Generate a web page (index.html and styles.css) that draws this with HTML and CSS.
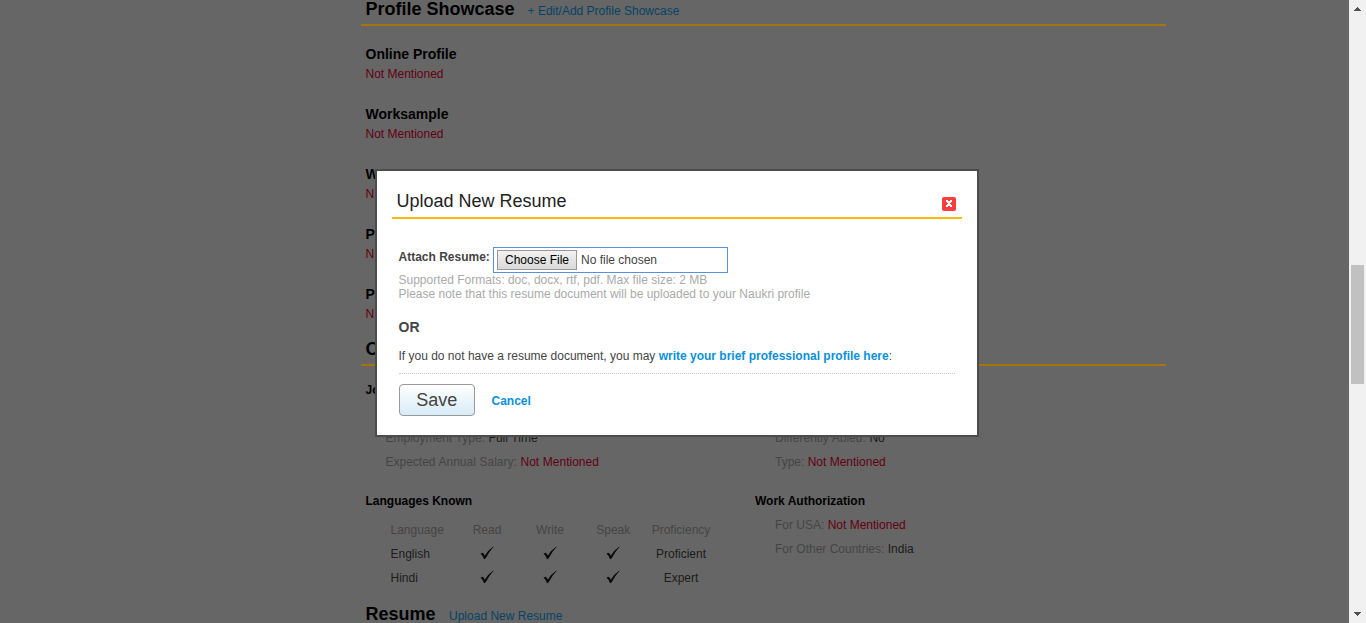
FILE: index.html
```
<!DOCTYPE html>
<html lang="en">
<head>
<meta charset="utf-8">
<title>Upload New Resume</title>
<link rel="stylesheet" href="styles.css">
</head>
<body>
<svg class="defs" width="0" height="0"><symbol id="tick" viewBox="0 0 14 14"><path d="M.5 7.6 2.8 6.8Q4 7.8 4.8 9.7 8 4 13.4.4L13.7.8Q8.8 6 5.7 12.2L4 13.2Q2.8 9.6.5 7.6Z" fill="#080808"/></symbol></svg>
<div class="page">
  <main class="content">
    <header class="section-head first"><h2>Profile Showcase</h2><a class="showcase-link">+ Edit/Add Profile Showcase</a></header>
    <div class="showcase">
      <section class="item"><h3>Online Profile</h3><p class="missing">Not Mentioned</p></section>
      <section class="item"><h3>Worksample</h3><p class="missing">Not Mentioned</p></section>
      <section class="item"><h3>W</h3><p class="missing">N</p></section>
      <section class="item"><h3>P</h3><p class="missing">N</p></section>
      <section class="item"><h3>P</h3><p class="missing">N</p></section>
    </div>
    <header class="section-head second"><h2>O</h2></header>
    <div class="columns">
      <section>
        <h4>Jo</h4>
        <p class="row"></p>
        <p class="row wide">Employment Type: <b>Full Time</b></p>
        <p class="row wide">Expected Annual Salary: <span class="missing">Not Mentioned</span></p>
        <h4 class="sub">Languages Known</h4>
        <div class="langs">
          <span class="name">Language</span><span>Read</span><span>Write</span><span>Speak</span><span>Proficiency</span>
          <b class="name">English</b><svg><use href="#tick"/></svg><svg><use href="#tick"/></svg><svg><use href="#tick"/></svg><b>Proficient</b>
          <b class="name">Hindi</b><svg><use href="#tick"/></svg><svg><use href="#tick"/></svg><svg><use href="#tick"/></svg><b>Expert</b>
        </div>
      </section>
      <section>
        <h4></h4>
        <p class="row"></p>
        <p class="row wide">Differently Abled: <b>No</b></p>
        <p class="row">Type: <span class="missing">Not Mentioned</span></p>
        <h4 class="sub">Work Authorization</h4>
        <p class="row">For USA: <span class="missing">Not Mentioned</span></p>
        <p class="row">For Other Countries: <b>India</b></p>
      </section>
    </div>
    <header class="resume-head"><h2>Resume</h2><a>Upload New Resume</a></header>
  </main>
  <div class="scrollbar">
    <svg width="17" height="17"><path d="M8 7h1v1h1v1h1v1h1v1H5v-1h1V9h1V8h1z" fill="#505050"/></svg>
    <div class="thumb"></div>
    <svg class="down" width="17" height="17"><path d="M5 6h7v1h-1v1h-1v1H9v1H8V9H7V8H6V7H5z" fill="#505050"/></svg>
  </div>
</div>
<div class="modal">
  <div class="modal-head"><h1>Upload New Resume</h1>
    <svg class="close" width="14" height="14"><rect width="14" height="14" rx="2" fill="#fa3c3c"/><path d="M4 3h2v1h2V3h2v2H9v1H8v1h1v1h1v2H8V9H6v1H4V8h1V7h1V6H5V5H4z" fill="#fff"/></svg>
  </div>
  <div class="modal-body">
    <div class="attach"><strong>Attach Resume:</strong><div class="file"><button>Choose File</button><span>No file chosen</span></div></div>
    <p class="hint">Supported Formats: doc, docx, rtf, pdf. Max file size: 2 MB<br>Please note that this resume document will be uploaded to your Naukri profile</p>
    <p class="or">OR</p>
    <p class="write"><span>If you do not have a resume document, you may </span><a>write your brief professional profile here</a>:</p>
    <div class="actions"><button class="save">Save</button><a>Cancel</a></div>
  </div>
</div>
</body>
</html>
```
FILE: styles.css
```
* { box-sizing: border-box; }
body { margin: 0; background: #666; font: 12px "Liberation Sans", Arial, sans-serif; overflow: hidden; }
h1, h2, h3, h4, p { margin: 0; }
.defs { position: absolute; }
.page { display: flex; justify-content: space-between; height: 623px; overflow: hidden; }
.content { width: 805px; margin-left: 361px; color: #454545; }
.content a { color: #064365; }
.content b { color: #1c1c1c; font-weight: normal; }
.content .missing { color: #640014; }
.section-head { display: flex; padding-left: 4.5px; border-bottom: 2px solid #a5730f; }
.first { height: 26px; }
.second { height: 22px; }
h2 { font-size: 18px; line-height: 20px; color: #000; }
.first h2 { margin-top: -1px; }
.second h2 { margin-top: -5px; }
.section-head a { margin-left: 13px; line-height: 22px; }
.showcase { padding: 18px 0 0 4.5px; }
.item { height: 60px; }
.item h3 { font-size: 14px; line-height: 20px; color: #000; }
.item .missing { line-height: 20px; }
.columns { display: grid; grid-template-columns: 389.5px 1fr; padding: 12px 0 0 4.5px; height: 236px; }
h4 { height: 24px; font-size: 12px; line-height: 24px; color: #000; }
h4.sub { margin: 15px 0 0; }
.row { height: 24px; line-height: 24px; padding-left: 20px; white-space: nowrap; }
.wide { word-spacing: .3px; }
.langs { display: grid; grid-template-columns: 65px 63px 63px 63.5px 72px; grid-auto-rows: 24px; padding: 5px 0 0 25px; line-height: 24px; text-align: center; }
.langs .name { text-align: left; }
.langs svg { width: 14px; height: 14px; justify-self: center; align-self: center; margin-top: -2px; }
.resume-head { display: flex; padding: 2px 0 0 4.5px; }
.resume-head a { margin-left: 13.5px; line-height: 24px; }
.scrollbar { width: 17px; height: 623px; background: #f1f1f1; display: flex; flex-direction: column; }
.thumb { width: 13px; height: 119px; background: #c1c1c1; margin: 248px 2px 0; }
.down { margin-top: auto; }
.modal { position: absolute; left: 375px; top: 169px; width: 604px; height: 268px; padding: 0 15px; border: 2px solid #4c4c4c; background: #fff; color: #444; }
.modal-head { display: flex; justify-content: space-between; height: 48px; padding: 18px 6px 0 4.5px; border-bottom: 2px solid #ffb80f; }
h1 { font-size: 18px; font-weight: normal; line-height: 24px; color: #222; }
.close { margin-top: 8px; }
.modal a { color: #0a91da; font-weight: bold; }
.modal-body { padding: 28px 7px 0 6.5px; }
.attach { display: flex; }
.attach strong { width: 94px; line-height: 20px; }
.file { display: flex; align-items: center; width: 235px; height: 26px; padding-left: 3.5px; border: 1px solid #5b8fdc; }
.file button { width: 80px; height: 20px; padding: 0; border: 1px solid #999; background: linear-gradient(#f2f2f2, #d9d9d9); font: 12px "Liberation Sans", Arial, sans-serif; color: #000; }
.file span { margin-left: 4px; }
.hint { color: #aaa; line-height: 14px; }
.or { margin-top: 17px; font-size: 14px; line-height: 18px; font-weight: bold; }
.write { height: 37px; margin-top: 1px; padding-top: 9px; line-height: 20px; border-bottom: 1px dotted #ccc; }
.actions { display: flex; align-items: center; gap: 16.5px; margin-top: 10px; }
.actions a { padding-top: 2px; }
.save { width: 76.5px; height: 32px; padding: 0; border: 1px solid #999; border-radius: 4px; background: linear-gradient(#fff, #d7ebf7); font: 18px "Liberation Sans", Arial, sans-serif; color: #444; }
```
